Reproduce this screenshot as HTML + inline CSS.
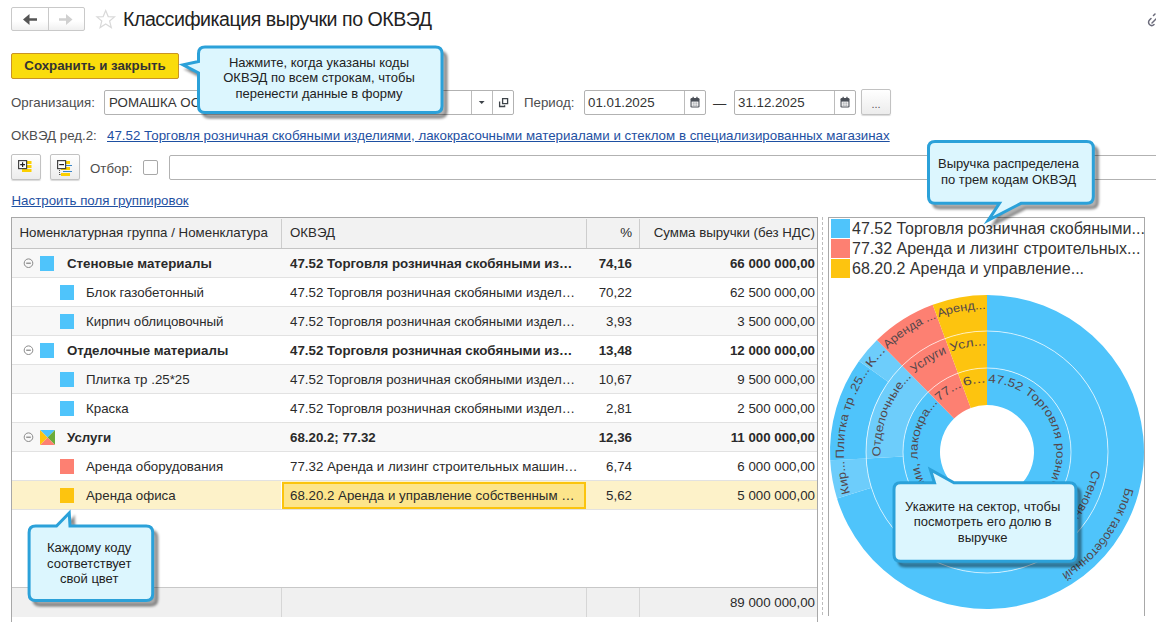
<!DOCTYPE html>
<html><head><meta charset="utf-8">
<style>
*{box-sizing:border-box;margin:0;padding:0}
html,body{width:1156px;height:622px;overflow:hidden;background:#fff}
body{position:relative;font-family:"Liberation Sans",sans-serif;font-size:13.3px;color:#2a2a2a}
.a{position:absolute;white-space:nowrap}
.lbl{color:#4d4d4d}
.lnk{color:#1e50a2;text-decoration:underline;text-underline-offset:0.5px}
.inp{position:absolute;border:1px solid #b2b2b2;border-radius:2px;background:#fff}
.sep{position:absolute;top:0;bottom:0;width:1px;background:#bcbcbc}
.btn{position:absolute;border:1px solid #c2c2c2;border-radius:2px;background:linear-gradient(#fff,#ececec);box-shadow:0 1px 1px rgba(0,0,0,.15)}
.tbl{position:absolute;left:11px;top:217px;width:807px;height:420px;border:1px solid #a8a8a8;background:#fff;overflow:hidden}
.row{position:absolute;left:0;width:805px;height:29px;border-bottom:1px solid #e3e3e3}
.row.g{background:#f8f8f8}
.c{position:absolute;top:0;height:28px;line-height:28px;white-space:nowrap;overflow:hidden}
.b{font-weight:bold}
.sq{position:absolute;width:14px;height:14px;top:7px}
.callout{position:absolute}
.ct{position:absolute;text-align:center;color:#222;font-size:13.3px;line-height:16px}
</style></head><body>

<!-- nav -->
<div class="a" style="left:11px;top:7px;width:74px;height:24px;border:1px solid #c9c9c9;border-radius:2px;background:linear-gradient(#fff 60%,#f0f0f0)"></div>
<div class="a" style="left:48px;top:8px;width:1px;height:22px;background:#c9c9c9"></div>
<svg class="a" style="left:0;top:0" width="130" height="36">
 <path d="M23 19.5 L29.5 14 L29.5 18.2 L37 18.2 L37 20.8 L29.5 20.8 L29.5 25 Z" fill="#555"/>
 <path d="M72.5 19.5 L66 14 L66 18.2 L59 18.2 L59 20.8 L66 20.8 L66 25 Z" fill="#d0d0d0"/>
 <path d="M105.7 10.5 L108.2 16.6 L114.5 16.9 L109.6 21 L111.3 27.6 L105.7 24 L100.1 27.6 L101.8 21 L96.9 16.9 L103.2 16.6 Z" fill="none" stroke="#d9d9d9" stroke-width="1.2"/>
</svg>
<div class="a" style="left:123px;top:7px;font-size:19.6px;letter-spacing:-0.48px;color:#222;line-height:24px">Классификация выручки по ОКВЭД</div>
<svg class="a" style="left:1145px;top:8px" width="16" height="24"><path d="M10 6 L8.5 7.5 M13 9 L7 15 M9 16.5 A3 3 0 0 1 4.5 12 L6 10.5" fill="none" stroke="#6a6a7a" stroke-width="1.5" stroke-linecap="round"/></svg>

<!-- save button -->
<div class="a b" style="left:11px;top:53px;width:168px;height:26px;background:#fadc0c;border:1px solid #c99326;border-radius:2px;text-align:center;line-height:24px;color:#333">Сохранить и закрыть</div>

<!-- org row -->
<div class="a lbl" style="left:11px;top:95px;line-height:16px">Организация:</div>
<div class="inp" style="left:104px;top:90px;width:410px;height:25px">
 <div class="a" style="left:4px;top:4px;line-height:16px;color:#333">РОМАШКА ООО</div>
 <div class="sep" style="left:365.5px"></div>
 <div class="sep" style="left:386.5px"></div>
 <svg class="a" style="left:-1px;top:-1px" width="410" height="25"><path d="M374.8 11 L380.6 11 L377.7 14 Z" fill="#3d4349"/><path d="M398.6 8.6 h5 v5 h-5 Z M395.6 11.5 v5 h5 v-1.2" fill="none" stroke="#3d4349" stroke-width="1.3"/></svg>
</div>
<div class="a lbl" style="left:524px;top:95px;line-height:16px">Период:</div>
<div class="inp" style="left:584px;top:90px;width:122px;height:25px">
 <div class="a" style="left:3px;top:4px;line-height:16px;color:#333">01.01.2025</div>
 <div class="sep" style="left:98.5px"></div>
 <svg class="a" style="left:99.5px;top:0" width="22" height="23"><rect x="5.5" y="7" width="9" height="9.6" rx="1.3" fill="#4a4f57"/><rect x="6.6" y="10.6" width="6.8" height="4.9" fill="#fff"/><g fill="#4a4f57"><circle cx="8.2" cy="12" r=".6"/><circle cx="10" cy="12" r=".6"/><circle cx="11.8" cy="12" r=".6"/><circle cx="8.2" cy="14" r=".6"/><circle cx="10" cy="14" r=".6"/><circle cx="11.8" cy="14" r=".6"/><rect x="7.5" y="5.8" width="1.3" height="2.5"/><rect x="11.3" y="5.8" width="1.3" height="2.5"/></g></svg>
</div>
<div class="a" style="left:713px;top:96px;line-height:16px;color:#333">—</div>
<div class="inp" style="left:734px;top:90px;width:122px;height:25px">
 <div class="a" style="left:3px;top:4px;line-height:16px;color:#333">31.12.2025</div>
 <div class="sep" style="left:98.5px"></div>
 <svg class="a" style="left:99.5px;top:0" width="22" height="23"><rect x="5.5" y="7" width="9" height="9.6" rx="1.3" fill="#4a4f57"/><rect x="6.6" y="10.6" width="6.8" height="4.9" fill="#fff"/><g fill="#4a4f57"><circle cx="8.2" cy="12" r=".6"/><circle cx="10" cy="12" r=".6"/><circle cx="11.8" cy="12" r=".6"/><circle cx="8.2" cy="14" r=".6"/><circle cx="10" cy="14" r=".6"/><circle cx="11.8" cy="14" r=".6"/><rect x="7.5" y="5.8" width="1.3" height="2.5"/><rect x="11.3" y="5.8" width="1.3" height="2.5"/></g></svg>
</div>
<div class="btn" style="left:861px;top:89px;width:30px;height:26px;text-align:center;line-height:28px;font-size:11px;color:#555">...</div>

<!-- okved -->
<div class="a lbl" style="left:11px;top:127.5px;line-height:16px">ОКВЭД ред.2:</div>
<div class="a lnk" style="left:107px;top:127.5px;line-height:16px;letter-spacing:0.025px">47.52 Торговля розничная скобяными изделиями, лакокрасочными материалами и стеклом в специализированных магазинах</div>

<!-- toolbar -->
<div class="btn" style="left:11px;top:154px;width:30px;height:26px"></div>
<div class="btn" style="left:50px;top:154px;width:30px;height:26px"></div>
<svg class="a" style="left:0;top:150px" width="90" height="32">
 <rect x="27" y="11" width="4.5" height="3" fill="#fcd000"/><rect x="27" y="15" width="4.5" height="3" fill="#fcd000"/><rect x="22" y="19" width="9.5" height="3" fill="#fcd000"/>
 <rect x="18.6" y="10.6" width="8" height="8" fill="#fff" stroke="#444" stroke-width="1.2"/><path d="M20.2 14.6h4.8M22.6 12.2v4.8" stroke="#222" stroke-width="1.2"/>
 <rect x="66" y="11" width="4" height="3" fill="#fcd000"/><rect x="66" y="15" width="6" height="1" fill="#3a86c8"/><rect x="61" y="17" width="9" height="3" fill="#fcd000"/>
 <rect x="63" y="21" width="9" height="1" fill="#3a86c8"/><rect x="61" y="23" width="9" height="3" fill="#fcd000"/>
 <rect x="59" y="20" width="1" height="1" fill="#555"/><rect x="59" y="22" width="1" height="1" fill="#555"/><rect x="59" y="24" width="1.5" height="1" fill="#555"/>
 <rect x="57.6" y="10.6" width="8" height="8" fill="#fff" stroke="#444" stroke-width="1.2"/><path d="M59.2 14.6h4.8" stroke="#222" stroke-width="1.2"/>
</svg>
<div class="a lbl" style="left:90px;top:160.5px;line-height:16px">Отбор:</div>
<div class="a" style="left:143px;top:160px;width:15px;height:15px;border:1px solid #a8a8a8;border-radius:2px;background:#fff"></div>
<div class="inp" style="left:169px;top:155px;width:1000px;height:25px"></div>

<div class="a lnk" style="left:11.5px;top:192.5px;line-height:16px">Настроить поля группировок</div>

<!-- table -->
<div class="tbl" id="tbl">
<div class="a" style="left:0;top:0;width:805px;height:31px;background:#f2f2f2;border-bottom:1px solid #c4c4c4"></div>
<div class="a" style="left:269px;top:1px;width:1px;height:29px;background:#cdcdcd"></div>
<div class="a" style="left:574px;top:1px;width:1px;height:29px;background:#cdcdcd"></div>
<div class="a" style="left:627px;top:1px;width:1px;height:29px;background:#cdcdcd"></div>
<div class="a" style="left:7.5px;top:0;line-height:30px">Номенклатурная группа / Номенклатура</div>
<div class="a" style="left:278px;top:0;line-height:30px">ОКВЭД</div>
<div class="a" style="left:574px;width:46px;top:0;line-height:30px;text-align:right">%</div>
<div class="a" style="left:627px;width:176px;top:0;line-height:30px;text-align:right">Сумма выручки (без НДС)</div>
<div class="a" style="left:0;top:31px;width:805px;height:28px;background:#f8f8f8"></div>
<div class="a" style="left:0;top:59px;width:805px;height:1px;background:#e2e2e2"></div>
<svg class="a" style="left:10px;top:39px" width="12" height="12"><circle cx="6.5" cy="6.2" r="4.3" fill="none" stroke="#8a8a8a" stroke-width="1"/><path d="M4.2 6.2h4.6" stroke="#777" stroke-width="1.1"/></svg>
<div class="a" style="left:28px;top:38px;width:14px;height:15px;background:#4fc4fb"></div>
<div class="a b" style="left:55px;top:32px;line-height:28px">Стеновые материалы</div>
<div class="a b" style="left:278px;top:32px;line-height:28px">47.52 Торговля розничная скобяными из…</div>
<div class="a b" style="left:574px;width:46px;top:32px;line-height:28px;text-align:right">74,16</div>
<div class="a b" style="left:627px;width:176px;top:32px;line-height:28px;text-align:right">66 000 000,00</div>
<div class="a" style="left:0;top:60px;width:805px;height:28px;background:#fff"></div>
<div class="a" style="left:0;top:88px;width:805px;height:1px;background:#e2e2e2"></div>
<div class="a" style="left:48px;top:67px;width:14px;height:15px;background:#4fc4fb"></div>
<div class="a" style="left:74px;top:61px;line-height:28px">Блок газобетонный</div>
<div class="a" style="left:278px;top:61px;line-height:28px">47.52 Торговля розничная скобяными издел…</div>
<div class="a" style="left:574px;width:46px;top:61px;line-height:28px;text-align:right">70,22</div>
<div class="a" style="left:627px;width:176px;top:61px;line-height:28px;text-align:right">62 500 000,00</div>
<div class="a" style="left:0;top:89px;width:805px;height:28px;background:#f8f8f8"></div>
<div class="a" style="left:0;top:117px;width:805px;height:1px;background:#e2e2e2"></div>
<div class="a" style="left:48px;top:96px;width:14px;height:15px;background:#4fc4fb"></div>
<div class="a" style="left:74px;top:90px;line-height:28px">Кирпич облицовочный</div>
<div class="a" style="left:278px;top:90px;line-height:28px">47.52 Торговля розничная скобяными издел…</div>
<div class="a" style="left:574px;width:46px;top:90px;line-height:28px;text-align:right">3,93</div>
<div class="a" style="left:627px;width:176px;top:90px;line-height:28px;text-align:right">3 500 000,00</div>
<div class="a" style="left:0;top:118px;width:805px;height:28px;background:#fff"></div>
<div class="a" style="left:0;top:146px;width:805px;height:1px;background:#e2e2e2"></div>
<svg class="a" style="left:10px;top:126px" width="12" height="12"><circle cx="6.5" cy="6.2" r="4.3" fill="none" stroke="#8a8a8a" stroke-width="1"/><path d="M4.2 6.2h4.6" stroke="#777" stroke-width="1.1"/></svg>
<div class="a" style="left:28px;top:125px;width:14px;height:15px;background:#4fc4fb"></div>
<div class="a b" style="left:55px;top:119px;line-height:28px">Отделочные материалы</div>
<div class="a b" style="left:278px;top:119px;line-height:28px">47.52 Торговля розничная скобяными из…</div>
<div class="a b" style="left:574px;width:46px;top:119px;line-height:28px;text-align:right">13,48</div>
<div class="a b" style="left:627px;width:176px;top:119px;line-height:28px;text-align:right">12 000 000,00</div>
<div class="a" style="left:0;top:147px;width:805px;height:28px;background:#f8f8f8"></div>
<div class="a" style="left:0;top:175px;width:805px;height:1px;background:#e2e2e2"></div>
<div class="a" style="left:48px;top:154px;width:14px;height:15px;background:#4fc4fb"></div>
<div class="a" style="left:74px;top:148px;line-height:28px">Плитка тр .25*25</div>
<div class="a" style="left:278px;top:148px;line-height:28px">47.52 Торговля розничная скобяными издел…</div>
<div class="a" style="left:574px;width:46px;top:148px;line-height:28px;text-align:right">10,67</div>
<div class="a" style="left:627px;width:176px;top:148px;line-height:28px;text-align:right">9 500 000,00</div>
<div class="a" style="left:0;top:176px;width:805px;height:28px;background:#fff"></div>
<div class="a" style="left:0;top:204px;width:805px;height:1px;background:#e2e2e2"></div>
<div class="a" style="left:48px;top:183px;width:14px;height:15px;background:#4fc4fb"></div>
<div class="a" style="left:74px;top:177px;line-height:28px">Краска</div>
<div class="a" style="left:278px;top:177px;line-height:28px">47.52 Торговля розничная скобяными издел…</div>
<div class="a" style="left:574px;width:46px;top:177px;line-height:28px;text-align:right">2,81</div>
<div class="a" style="left:627px;width:176px;top:177px;line-height:28px;text-align:right">2 500 000,00</div>
<div class="a" style="left:0;top:205px;width:805px;height:28px;background:#f8f8f8"></div>
<div class="a" style="left:0;top:233px;width:805px;height:1px;background:#e2e2e2"></div>
<svg class="a" style="left:10px;top:213px" width="12" height="12"><circle cx="6.5" cy="6.2" r="4.3" fill="none" stroke="#8a8a8a" stroke-width="1"/><path d="M4.2 6.2h4.6" stroke="#777" stroke-width="1.1"/></svg>
<svg class="a" style="left:28px;top:212px" width="15" height="15"><path d="M0 0H15L7.5 7.5Z" fill="#4fc4fb"/><path d="M15 0V15L7.5 7.5Z" fill="#6aab3a"/><path d="M0 15H15L7.5 7.5Z" fill="#fd8072"/><path d="M0 0V15L7.5 7.5Z" fill="#fdc40f"/></svg>
<div class="a b" style="left:55px;top:206px;line-height:28px">Услуги</div>
<div class="a b" style="left:278px;top:206px;line-height:28px">68.20.2; 77.32</div>
<div class="a b" style="left:574px;width:46px;top:206px;line-height:28px;text-align:right">12,36</div>
<div class="a b" style="left:627px;width:176px;top:206px;line-height:28px;text-align:right">11 000 000,00</div>
<div class="a" style="left:0;top:234px;width:805px;height:28px;background:#fff"></div>
<div class="a" style="left:0;top:262px;width:805px;height:1px;background:#e2e2e2"></div>
<div class="a" style="left:48px;top:241px;width:14px;height:15px;background:#fd8072"></div>
<div class="a" style="left:74px;top:235px;line-height:28px">Аренда оборудования</div>
<div class="a" style="left:278px;top:235px;line-height:28px">77.32 Аренда и лизинг строительных машин…</div>
<div class="a" style="left:574px;width:46px;top:235px;line-height:28px;text-align:right">6,74</div>
<div class="a" style="left:627px;width:176px;top:235px;line-height:28px;text-align:right">6 000 000,00</div>
<div class="a" style="left:0;top:263px;width:805px;height:28px;background:#fdf2c9"></div>
<div class="a" style="left:0;top:291px;width:805px;height:1px;background:#e2e2e2"></div>
<div class="a" style="left:48px;top:270px;width:14px;height:15px;background:#fdc40f"></div>
<div class="a" style="left:74px;top:264px;line-height:28px">Аренда офиса</div>
<div class="a" style="left:270px;top:264px;width:304px;height:27px;background:#fde58b;border:2px solid #fbc40e"></div>
<div class="a" style="left:269px;top:263px;width:1px;height:28px;background:#fff"></div>
<div class="a" style="left:278px;top:264px;line-height:28px">68.20.2 Аренда и управление собственным …</div>
<div class="a" style="left:574px;width:46px;top:264px;line-height:28px;text-align:right">5,62</div>
<div class="a" style="left:627px;width:176px;top:264px;line-height:28px;text-align:right">5 000 000,00</div>
<div class="a" style="left:0;top:369px;width:805px;height:30px;background:#f0f0f0;border-top:1px solid #c8c8c8"></div>
<div class="a" style="left:269px;top:370px;width:1px;height:29px;background:#d6d6d6"></div>
<div class="a" style="left:574px;top:370px;width:1px;height:29px;background:#d6d6d6"></div>
<div class="a" style="left:627px;top:370px;width:1px;height:29px;background:#d6d6d6"></div>
<div class="a" style="left:627px;width:176px;top:370px;line-height:29px;text-align:right">89 000 000,00</div>
</div>

<!-- chart panel -->
<div class="a" style="left:822px;top:217px;width:0;height:398px;border-left:1px dashed #bdbdbd"></div>
<div class="a" style="left:828px;top:217px;width:317px;height:399px;border:1px solid #a8a8a8;border-bottom:none;background:#fff"></div>

<svg class="a" style="left:0;top:0" width="1156" height="622" viewBox="0 0 1156 622"><defs><path id="p1" d="M987.00 309.00 A143.0 143.0 0 1 1 850.39 494.26" fill="none"/><path id="p2" d="M850.04 493.12 A143.0 143.0 0 0 1 844.27 460.77" fill="none"/><path id="p3" d="M844.14 458.37 A143.0 143.0 0 0 1 869.74 370.16" fill="none"/><path id="p4" d="M871.13 368.20 A143.0 143.0 0 0 1 885.93 350.84" fill="none"/><path id="p5" d="M887.64 349.16 A143.0 143.0 0 0 1 936.44 318.24" fill="none"/><path id="p6" d="M938.69 317.41 A143.0 143.0 0 0 1 985.80 309.01" fill="none"/><path id="p7" d="M987.00 345.50 A106.5 106.5 0 1 1 880.65 457.64" fill="none"/><path id="p8" d="M880.59 456.44 A106.5 106.5 0 0 1 911.51 376.88" fill="none"/><path id="p9" d="M912.36 376.03 A106.5 106.5 0 0 1 950.18 352.07" fill="none"/><path id="p10" d="M951.31 351.66 A106.5 106.5 0 0 1 985.80 345.51" fill="none"/><path id="p11" d="M988.20 382.51 A69.5 69.5 0 1 1 937.44 403.27" fill="none"/><path id="p12" d="M939.15 401.59 A69.5 69.5 0 0 1 961.85 387.21" fill="none"/><path id="p13" d="M964.10 386.38 A69.5 69.5 0 0 1 985.80 382.51" fill="none"/></defs><path d="M987.00 295.00 A157 157 0 1 1 837.01 498.40 L871.41 487.76 A121 121 0 1 0 987.00 331.00 Z" fill="#4fc4fb"/><path d="M837.01 498.40 A157 157 0 0 1 830.22 460.31 L866.17 458.40 A121 121 0 0 0 871.41 487.76 Z" fill="#6dcdfb"/><path d="M830.22 460.31 A157 157 0 0 1 859.01 361.07 L888.36 381.92 A121 121 0 0 0 866.17 458.40 Z" fill="#4fc4fb"/><path d="M859.01 361.07 A157 157 0 0 1 876.97 340.01 L902.20 365.69 A121 121 0 0 0 888.36 381.92 Z" fill="#6dcdfb"/><path d="M876.97 340.01 A157 157 0 0 1 932.72 304.68 L945.17 338.46 A121 121 0 0 0 902.20 365.69 Z" fill="#fd8072"/><path d="M932.72 304.68 A157 157 0 0 1 987.00 295.00 L987.00 331.00 A121 121 0 0 0 945.17 338.46 Z" fill="#fdc40f"/><path d="M987.00 331.00 A121 121 0 1 1 866.17 458.40 L903.12 456.45 A84 84 0 1 0 987.00 368.00 Z" fill="#4fc4fb"/><path d="M866.17 458.40 A121 121 0 0 1 902.20 365.69 L928.13 392.08 A84 84 0 0 0 903.12 456.45 Z" fill="#6dcdfb"/><path d="M902.20 365.69 A121 121 0 0 1 945.17 338.46 L957.96 373.18 A84 84 0 0 0 928.13 392.08 Z" fill="#fd8072"/><path d="M945.17 338.46 A121 121 0 0 1 987.00 331.00 L987.00 368.00 A84 84 0 0 0 957.96 373.18 Z" fill="#fdc40f"/><path d="M987.00 368.00 A84 84 0 1 1 928.13 392.08 L954.06 418.47 A47 47 0 1 0 987.00 405.00 Z" fill="#4fc4fb"/><path d="M928.13 392.08 A84 84 0 0 1 957.96 373.18 L970.75 407.90 A47 47 0 0 0 954.06 418.47 Z" fill="#fd8072"/><path d="M957.96 373.18 A84 84 0 0 1 987.00 368.00 L987.00 405.00 A47 47 0 0 0 970.75 407.90 Z" fill="#fdc40f"/><circle cx="987" cy="452" r="84" fill="none" stroke="#fff" stroke-width="1" opacity=".65"/><circle cx="987" cy="452" r="121" fill="none" stroke="#fff" stroke-width="1" opacity=".65"/><g font-family="Liberation Sans" font-size="11.8" fill="#54474b"><text font-size="12.4"><textPath href="#p1" startOffset="50%" text-anchor="middle">Блок газобетонный</textPath></text><text textLength="32.9" lengthAdjust="spacingAndGlyphs"><textPath href="#p2" textLength="32.9" lengthAdjust="spacingAndGlyphs">Кир...</textPath></text><text textLength="93.5" lengthAdjust="spacingAndGlyphs"><textPath href="#p3" textLength="93.5" lengthAdjust="spacingAndGlyphs">Плитка тр .25...</textPath></text><text textLength="22.8" lengthAdjust="spacingAndGlyphs"><textPath href="#p4" textLength="22.8" lengthAdjust="spacingAndGlyphs">К...</textPath></text><text textLength="58.2" lengthAdjust="spacingAndGlyphs"><textPath href="#p5" textLength="58.2" lengthAdjust="spacingAndGlyphs">Аренда ...</textPath></text><text textLength="48.1" lengthAdjust="spacingAndGlyphs"><textPath href="#p6" textLength="48.1" lengthAdjust="spacingAndGlyphs">Аренд...</textPath></text><text font-size="12.4"><textPath href="#p7" startOffset="50%" text-anchor="middle">Стеновые материалы</textPath></text><text textLength="87.8" lengthAdjust="spacingAndGlyphs"><textPath href="#p8" textLength="87.8" lengthAdjust="spacingAndGlyphs">Отделочные...</textPath></text><text font-size="12.4"><textPath href="#p9" startOffset="50%" text-anchor="middle">Услуги</textPath></text><text textLength="35.2" lengthAdjust="spacingAndGlyphs"><textPath href="#p10" textLength="35.2" lengthAdjust="spacingAndGlyphs">Усл...</textPath></text><text textLength="380.3" lengthAdjust="spacingAndGlyphs"><textPath href="#p11" textLength="380.3" lengthAdjust="spacingAndGlyphs">47.52 Торговля розничная скобяными изделиями, лакокра...</textPath></text><text textLength="27.0" lengthAdjust="spacingAndGlyphs"><textPath href="#p12" textLength="27.0" lengthAdjust="spacingAndGlyphs">77...</textPath></text><text textLength="22.1" lengthAdjust="spacingAndGlyphs"><textPath href="#p13" textLength="22.1" lengthAdjust="spacingAndGlyphs">6...</textPath></text></g></svg>
<div class="a" style="left:831px;top:219px;width:19px;height:18.5px;background:#4fc4fb"></div>
<div class="a" style="left:831px;top:239px;width:19px;height:18.5px;background:#fd8072"></div>
<div class="a" style="left:831px;top:259px;width:19px;height:18.5px;background:#fdc40f"></div>
<div class="a" style="left:852px;top:220px;font-size:16px;line-height:18px;color:#333">47.52 Торговля розничная скобяными...</div>
<div class="a" style="left:852px;top:240px;font-size:16px;line-height:18px;color:#333">77.32 Аренда и лизинг строительных...</div>
<div class="a" style="left:852px;top:260px;font-size:16px;line-height:18px;color:#333">68.20.2 Аренда и управление...</div>
<svg width="0" height="0" style="position:absolute"><defs><filter id="blur" x="-10%" y="-10%" width="120%" height="120%"><feGaussianBlur stdDeviation="1"/></filter></defs></svg><svg class="a" style="left:0;top:0" width="1156" height="622"><path d="M205.0 47 L435.5 47 Q442 47 442 53.5 L442 106.0 Q442 112.5 435.5 112.5 L205.0 112.5 Q198.5 112.5 198.5 106.0 L198.5 73 L183.01342303396765 64.8279699575179 L198.5 61.5 L198.5 53.5 Q198.5 47 205.0 47 Z" transform="translate(4.5,5)" fill="rgba(0,0,0,.3)" stroke="rgba(0,0,0,.3)" stroke-width="3" filter="url(#blur)"/><path d="M205.0 47 L435.5 47 Q442 47 442 53.5 L442 106.0 Q442 112.5 435.5 112.5 L205.0 112.5 Q198.5 112.5 198.5 106.0 L198.5 73 L183.01342303396765 64.8279699575179 L198.5 61.5 L198.5 53.5 Q198.5 47 205.0 47 Z" fill="#dcf6fe" stroke="#2ba1d9" stroke-width="3" stroke-linejoin="miter" stroke-miterlimit="30"/><g font-family="Liberation Sans" font-size="13" fill="#222" text-anchor="middle"><text x="319" y="66.6">Нажмите, когда указаны коды</text><text x="319" y="82.3">ОКВЭД по всем строкам, чтобы</text><text x="319" y="98">перенести данные в форму</text></g></svg><svg class="a" style="left:0;top:0" width="1156" height="622"><path d="M935.0 141.5 L1086.8 141.5 Q1093.3 141.5 1093.3 148.0 L1093.3 196.8 Q1093.3 203.3 1086.8 203.3 L1021 203.3 L988.2061492527762 220.34730037385512 L999.5 203.3 L935.0 203.3 Q928.5 203.3 928.5 196.8 L928.5 148.0 Q928.5 141.5 935.0 141.5 Z" transform="translate(4.5,5)" fill="rgba(0,0,0,.3)" stroke="rgba(0,0,0,.3)" stroke-width="3" filter="url(#blur)"/><path d="M935.0 141.5 L1086.8 141.5 Q1093.3 141.5 1093.3 148.0 L1093.3 196.8 Q1093.3 203.3 1086.8 203.3 L1021 203.3 L988.2061492527762 220.34730037385512 L999.5 203.3 L935.0 203.3 Q928.5 203.3 928.5 196.8 L928.5 148.0 Q928.5 141.5 935.0 141.5 Z" fill="#dcf6fe" stroke="#2ba1d9" stroke-width="3" stroke-linejoin="miter" stroke-miterlimit="30"/><g font-family="Liberation Sans" font-size="13" fill="#222" text-anchor="middle"><text x="1008.5" y="168">Выручка распределена</text><text x="1008.5" y="183.8">по трем кодам ОКВЭД</text></g></svg><svg class="a" style="left:0;top:0" width="1156" height="622"><path d="M35.6 526 L56.5 526 L69.2419645433167 512.9727982775206 L70 526 L146.2 526 Q152.7 526 152.7 532.5 L152.7 594.0 Q152.7 600.5 146.2 600.5 L35.6 600.5 Q29.1 600.5 29.1 594.0 L29.1 532.5 Q29.1 526 35.6 526 Z" transform="translate(4.5,5)" fill="rgba(0,0,0,.3)" stroke="rgba(0,0,0,.3)" stroke-width="3" filter="url(#blur)"/><path d="M35.6 526 L56.5 526 L69.2419645433167 512.9727982775206 L70 526 L146.2 526 Q152.7 526 152.7 532.5 L152.7 594.0 Q152.7 600.5 146.2 600.5 L35.6 600.5 Q29.1 600.5 29.1 594.0 L29.1 532.5 Q29.1 526 35.6 526 Z" fill="#dcf6fe" stroke="#2ba1d9" stroke-width="3" stroke-linejoin="miter" stroke-miterlimit="30"/><g font-family="Liberation Sans" font-size="13" fill="#222" text-anchor="middle"><text x="89.2" y="552">Каждому коду</text><text x="89.2" y="568">соответствует</text><text x="89.2" y="583">свой цвет</text></g></svg><svg class="a" style="left:0;top:0" width="1156" height="622"><path d="M900.5 482.8 L934.5 482.8 L930.3461635671008 469.594765016287 L954 482.8 L1069.4 482.8 Q1075.9 482.8 1075.9 489.3 L1075.9 554.8 Q1075.9 561.3 1069.4 561.3 L900.5 561.3 Q894 561.3 894 554.8 L894 489.3 Q894 482.8 900.5 482.8 Z" transform="translate(4.5,5)" fill="rgba(0,0,0,.3)" stroke="rgba(0,0,0,.3)" stroke-width="3" filter="url(#blur)"/><path d="M900.5 482.8 L934.5 482.8 L930.3461635671008 469.594765016287 L954 482.8 L1069.4 482.8 Q1075.9 482.8 1075.9 489.3 L1075.9 554.8 Q1075.9 561.3 1069.4 561.3 L900.5 561.3 Q894 561.3 894 554.8 L894 489.3 Q894 482.8 900.5 482.8 Z" fill="#dcf6fe" stroke="#2ba1d9" stroke-width="3" stroke-linejoin="miter" stroke-miterlimit="30"/><g font-family="Liberation Sans" font-size="13" fill="#222" text-anchor="middle"><text x="982.7" y="510.6">Укажите на сектор, чтобы</text><text x="982.7" y="526">посмотреть его долю в</text><text x="982.7" y="542">выручке</text></g></svg>
</body></html>
